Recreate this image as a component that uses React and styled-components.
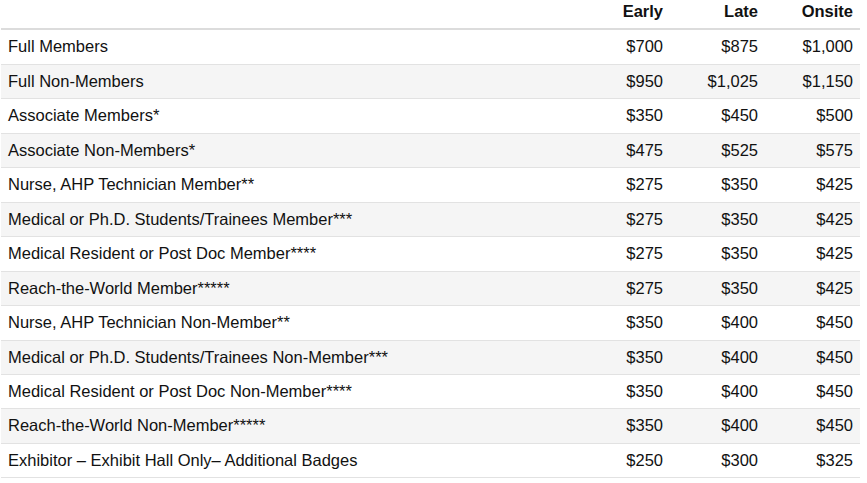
import styled, { createGlobalStyle } from 'styled-components';

const GlobalStyle = createGlobalStyle`
	html, body {
		margin: 0;
		padding: 0;
		background: #fff;
	}
	body {
		font-family: 'Liberation Sans', Arial, sans-serif;
		color: #111;
	}
`;

const Page = styled.main`
	padding: 0 0 0 1px;
`;

const PriceTable = styled.table`
	width: 859px;
	border-collapse: separate;
	border-spacing: 0;
	table-layout: fixed;
	font-size: 16.5px;
	line-height: 17.46px;

	th,
	td {
		box-sizing: border-box;
	}
`;

const HeadCell = styled.th`
	padding: 3px 7px 7.5px 7px;
	font-weight: 700;
	text-align: ${(p) => (p.$align === 'right' ? 'right' : 'left')};
	border-bottom: 2px solid #dcdcdc;
	width: ${(p) => (p.$width ? `${p.$width}px` : 'auto')};
`;

const Row = styled.tr`
	background: ${(p) => (p.$striped ? '#f5f5f5' : '#fff')};

	&:first-child td {
		border-top: none;
		padding-top: 8.5px;
	}

	&:last-child td {
		border-bottom: 1px solid #e2e2e2;
	}
`;

const Cell = styled.td`
	padding: 8px 7px 8px 7px;
	border-top: 1px solid #e2e2e2;
	text-align: ${(p) => (p.$align === 'right' ? 'right' : 'left')};
	white-space: nowrap;
`;

const rates = [
	['Full Members', '$700', '$875', '$1,000'],
	['Full Non-Members', '$950', '$1,025', '$1,150'],
	['Associate Members*', '$350', '$450', '$500'],
	['Associate Non-Members*', '$475', '$525', '$575'],
	['Nurse, AHP Technician Member**', '$275', '$350', '$425'],
	['Medical or Ph.D. Students/Trainees Member***', '$275', '$350', '$425'],
	['Medical Resident or Post Doc Member****', '$275', '$350', '$425'],
	['Reach-the-World Member*****', '$275', '$350', '$425'],
	['Nurse, AHP Technician Non-Member**', '$350', '$400', '$450'],
	['Medical or Ph.D. Students/Trainees Non-Member***', '$350', '$400', '$450'],
	['Medical Resident or Post Doc Non-Member****', '$350', '$400', '$450'],
	['Reach-the-World Non-Member*****', '$350', '$400', '$450'],
	['Exhibitor \u2013 Exhibit Hall Only\u2013 Additional Badges', '$250', '$300', '$325'],
];

export default function App() {
	return (
		<>
			<GlobalStyle />
			<Page>
				<PriceTable>
					<thead>
						<tr>
							<HeadCell>&nbsp;</HeadCell>
							<HeadCell $align="right" $width={95}>Early</HeadCell>
							<HeadCell $align="right" $width={95}>Late</HeadCell>
							<HeadCell $align="right" $width={95}>Onsite</HeadCell>
						</tr>
					</thead>
					<tbody>
						{rates.map(([label, early, late, onsite], i) => (
							<Row key={label} $striped={i % 2 === 1}>
								<Cell>{label}</Cell>
								<Cell $align="right">{early}</Cell>
								<Cell $align="right">{late}</Cell>
								<Cell $align="right">{onsite}</Cell>
							</Row>
						))}
					</tbody>
				</PriceTable>
			</Page>
		</>
	);
}
